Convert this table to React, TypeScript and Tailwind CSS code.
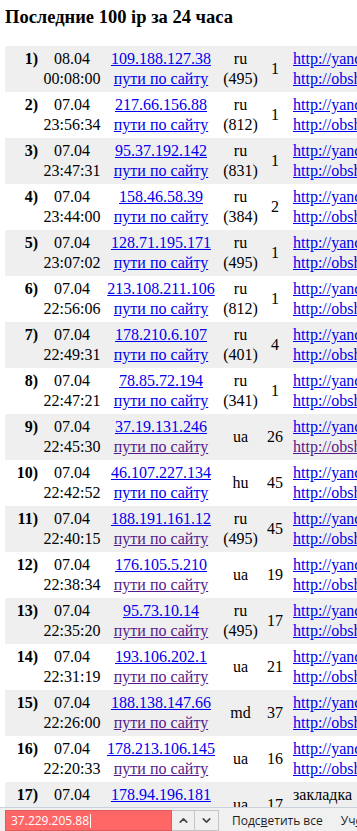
import { ChevronUp, ChevronDown } from "lucide-react";

/* ================= TYPES ================= */
interface Visit {
  n: number;
  date: string;
  time: string;
  ip: string;
  country: string;
  code?: string;
  count: number;
  pathVisited?: boolean;
  refVisited?: boolean;
  bookmark?: boolean;
}

/* ================= DATA ================= */
const visits: Visit[] = [
  { n: 1, date: "08.04", time: "00:08:00", ip: "109.188.127.38", country: "ru", code: "(495)", count: 1 },
  { n: 2, date: "07.04", time: "23:56:34", ip: "217.66.156.88", country: "ru", code: "(812)", count: 1 },
  { n: 3, date: "07.04", time: "23:47:31", ip: "95.37.192.142", country: "ru", code: "(831)", count: 1 },
  { n: 4, date: "07.04", time: "23:44:00", ip: "158.46.58.39", country: "ru", code: "(384)", count: 2 },
  { n: 5, date: "07.04", time: "23:07:02", ip: "128.71.195.171", country: "ru", code: "(495)", count: 1 },
  { n: 6, date: "07.04", time: "22:56:06", ip: "213.108.211.106", country: "ru", code: "(812)", count: 1 },
  { n: 7, date: "07.04", time: "22:49:31", ip: "178.210.6.107", country: "ru", code: "(401)", count: 4 },
  { n: 8, date: "07.04", time: "22:47:21", ip: "78.85.72.194", country: "ru", code: "(341)", count: 1 },
  { n: 9, date: "07.04", time: "22:45:30", ip: "37.19.131.246", country: "ua", count: 26, pathVisited: true, refVisited: true },
  { n: 10, date: "07.04", time: "22:42:52", ip: "46.107.227.134", country: "hu", count: 45 },
  { n: 11, date: "07.04", time: "22:40:15", ip: "188.191.161.12", country: "ru", code: "(495)", count: 45, pathVisited: true },
  { n: 12, date: "07.04", time: "22:38:34", ip: "176.105.5.210", country: "ua", count: 19, pathVisited: true },
  { n: 13, date: "07.04", time: "22:35:20", ip: "95.73.10.14", country: "ru", code: "(495)", count: 17, pathVisited: true },
  { n: 14, date: "07.04", time: "22:31:19", ip: "193.106.202.1", country: "ua", count: 21, pathVisited: true },
  { n: 15, date: "07.04", time: "22:26:00", ip: "188.138.147.66", country: "md", count: 37, pathVisited: true },
  { n: 16, date: "07.04", time: "22:20:33", ip: "178.213.106.145", country: "ua", count: 16, pathVisited: true },
  { n: 17, date: "07.04", time: "22:18:47", ip: "178.94.196.181", country: "ua", count: 17, bookmark: true },
];

/* ================= COMPONENT ================= */
export default function App() {
  return (
    <div className="relative w-[357px] h-[831px] overflow-hidden bg-white text-black font-['Liberation_Serif','Times_New_Roman',serif]">
      <h1 className="pl-[5px] pt-[7px] text-[18.5px] leading-[20px] font-bold whitespace-nowrap">
        Последние 100 ip за 24 часа
      </h1>

      {/* TABLE */}
      <table className="ml-[5px] mt-[19px] border-collapse text-[16px] leading-[20px] w-[560px] table-fixed">
        <colgroup>
          <col className="w-[36px]" />
          <col className="w-[62px]" />
          <col className="w-[116px]" />
          <col className="w-[43px]" />
          <col className="w-[26px]" />
          <col />
        </colgroup>
        <tbody>
          {visits.map((v) => (
            <tr key={v.n} className={v.n % 2 === 1 ? "bg-[#efefef]" : "bg-white"}>
              <td className="h-[46px] py-[3px] pr-[3px] text-right align-top font-bold whitespace-nowrap">
                {v.n})
              </td>
              <td className="py-[3px] text-center align-middle whitespace-nowrap">
                {v.date}
                <br />
                {v.time}
              </td>
              <td className="py-[3px] text-center align-middle whitespace-nowrap">
                <a className="text-[#0000ee] underline">{v.ip}</a>
                <br />
                <a className={`underline ${v.pathVisited ? "text-[#551a8b]" : "text-[#0000ee]"}`}>
                  пути по сайту
                </a>
              </td>
              <td className="py-[3px] text-center align-middle whitespace-nowrap">
                {v.country}
                {v.code && (
                  <>
                    <br />
                    {v.code}
                  </>
                )}
              </td>
              <td className="py-[3px] text-center align-middle whitespace-nowrap">{v.count}</td>
              <td className="py-[3px] pl-[5px] text-left align-middle whitespace-nowrap">
                {v.bookmark ? (
                  <>
                    закладка
                    <br />
                    &nbsp;
                  </>
                ) : (
                  <>
                    <a className="text-[#0000ee] underline">http://yandex.ru/yandsearch?text=</a>
                    <br />
                    <a className={`underline ${v.refVisited ? "text-[#551a8b]" : "text-[#0000ee]"}`}>
                      http://obshenie.ru/
                    </a>
                  </>
                )}
              </td>
            </tr>
          ))}
        </tbody>
      </table>

      {/* FIND BAR */}
      <div className="absolute left-0 right-0 bottom-0 h-[24px] bg-[#f0f0f0] border-t border-[#c9d1dc] flex items-end pl-[5px] font-['Open_Sans','Liberation_Sans',sans-serif] text-[12px] text-[#1e1e1e]">
        <div className="shrink-0 w-[167px] h-[21px] bg-[#ff6666] border border-[#e05a5a] flex items-center pl-[5px] text-white">
          <span>37.229.205.88</span>
          <span className="w-px h-[14px] bg-white ml-px" />
        </div>
        <div className="shrink-0 h-[21px] flex border-y border-r border-[#c4c4c4]">
          <div className="w-[23px] flex items-center justify-center border-r border-[#c4c4c4]">
            <ChevronUp size={13} strokeWidth={3} className="text-[#444]" />
          </div>
          <div className="w-[23px] flex items-center justify-center">
            <ChevronDown size={13} strokeWidth={3} className="text-[#444]" />
          </div>
        </div>
        <div className="shrink-0 h-[21px] flex items-center pl-[13px] whitespace-nowrap">
          Подс<span className="underline">в</span>етить все
        </div>
        <div className="shrink-0 h-[21px] flex items-center pl-[18px] whitespace-nowrap">
          Уч<span className="underline">е</span>сть регистр
        </div>
      </div>
    </div>
  );
}
